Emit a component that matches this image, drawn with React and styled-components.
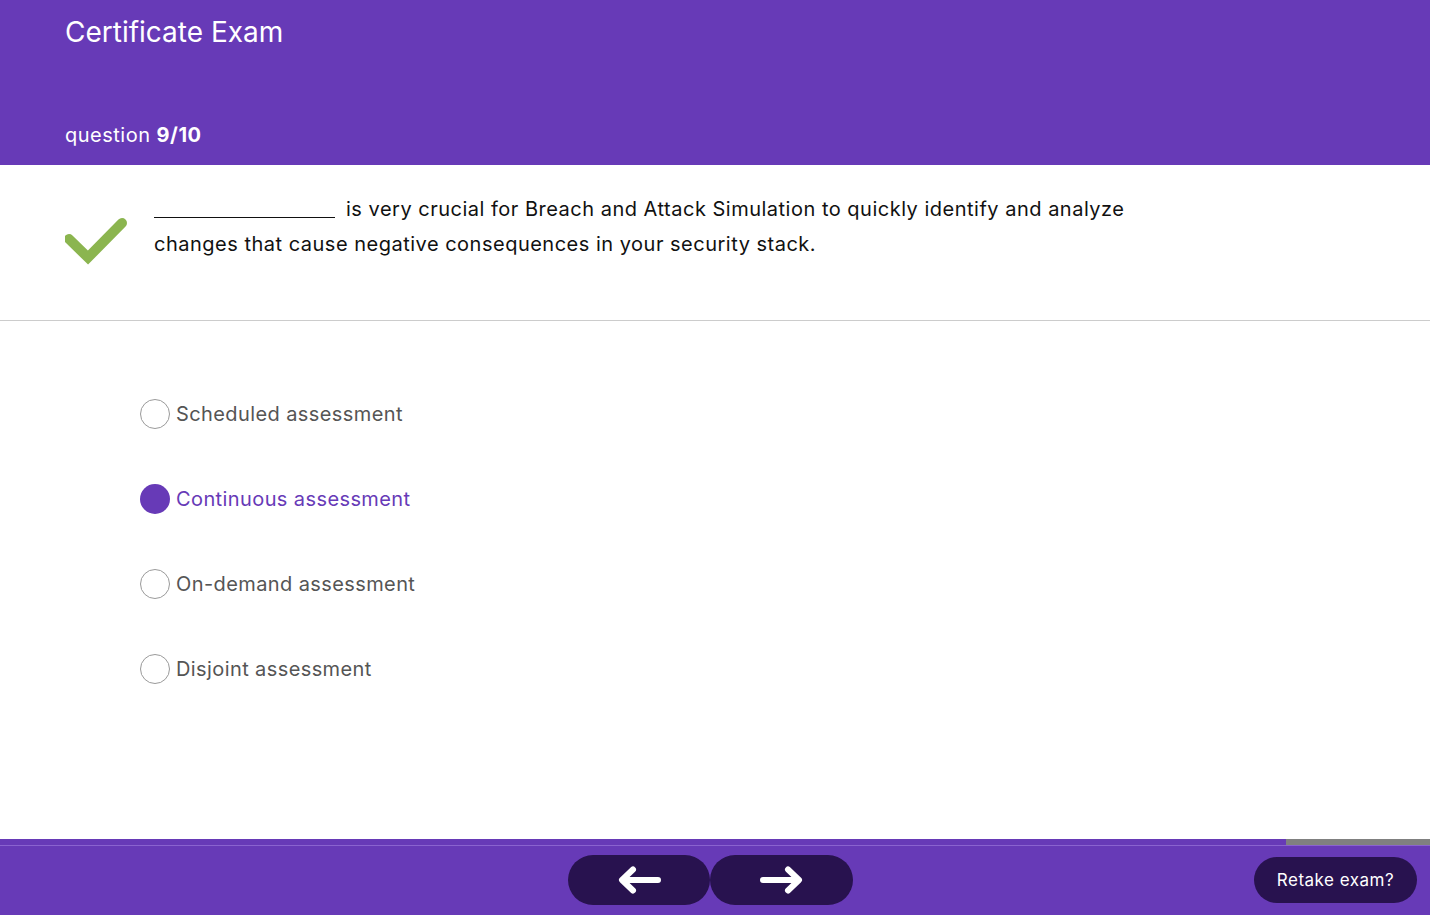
import React, { useState } from "react";
import styled, { createGlobalStyle } from "styled-components";

const GlobalStyle = createGlobalStyle`
  html, body {
    margin: 0;
    padding: 0;
    background: #ffffff;
    font-family: Inter, "Noto Sans", sans-serif;
  }
`;

const Page = styled.div`
  height: 915px;
  display: flex;
  flex-direction: column;
  overflow: hidden;
`;

const Header = styled.header`
  height: 165px;
  box-sizing: border-box;
  background-color: #673ab7;
  color: #ffffff;
  padding: 15px 65px 0;
  display: flex;
  flex-direction: column;
`;

const Title = styled.h1`
  margin: 0;
  font-size: 28px;
  font-weight: 400;
  line-height: 34px;
`;

const Counter = styled.div`
  margin-top: auto;
  margin-bottom: 16px;
  font-size: 20px;
  line-height: 28px;
  letter-spacing: 0.5px;

  b {
    font-weight: 700;
  }
`;

const QuestionRow = styled.section`
  height: 156px;
  box-sizing: border-box;
  border-bottom: 1px solid #cccccc;
  display: flex;
  align-items: center;
  padding: 0 0 0 65px;
`;

const Mark = styled.div`
  width: 65px;
  height: 50px;
  flex-shrink: 0;
  margin-right: 24px;
`;

const QuestionText = styled.p`
  margin: 0 0 32px;
  width: 1000px;
  font-size: 20px;
  line-height: 35px;
  letter-spacing: 0.5px;
  color: #111111;
`;

const Blank = styled.span`
  display: inline-block;
  width: 181px;
  border-bottom: 1.5px solid #111111;
  margin-right: 11px;
  vertical-align: -2px;
`;

const Options = styled.div`
  flex: 1;
  padding: 78px 0 0 140px;
  display: flex;
  flex-direction: column;
  gap: 55px;
`;

const Option = styled.label`
  display: flex;
  align-items: center;
  height: 30px;
  cursor: pointer;
  font-size: 20px;
  letter-spacing: 0.4px;
  color: ${(p) => (p.$selected ? "#673ab7" : "#555555")};
`;

const Radio = styled.span`
  width: 30px;
  height: 30px;
  box-sizing: border-box;
  border-radius: 50%;
  margin-right: 6px;
  border: ${(p) => (p.$selected ? "none" : "1.5px solid #9a9a9a")};
  background: ${(p) => (p.$selected ? "#673ab7" : "#ffffff")};
`;

const Progress = styled.div`
  height: 6px;
  background: #808080;
  display: flex;
`;

const ProgressFill = styled.div`
  height: 100%;
  background: #673ab7;
`;

const Footer = styled.footer`
  height: 70px;
  box-sizing: border-box;
  background: #673ab7;
  border-top: 1px solid #8a63cf;
  position: relative;
  display: flex;
  align-items: center;
  justify-content: center;
  padding-bottom: 2px;
`;

const NavGroup = styled.div`
  display: flex;
  margin-left: -9px;
`;

const NavButton = styled.button`
  width: ${(p) => p.$w}px;
  height: 50px;
  border: none;
  border-radius: 25px;
  background: #28124f;
  display: flex;
  align-items: center;
  justify-content: center;
  cursor: pointer;
  padding: 0;
`;

const Retake = styled.button`
  position: absolute;
  right: 13px;
  top: 11px;
  width: 163px;
  height: 46px;
  border: none;
  border-radius: 23px;
  background: #28124f;
  color: #ffffff;
  font-family: Inter, "Noto Sans", sans-serif;
  font-size: 17px;
  letter-spacing: 0.5px;
  cursor: pointer;
`;

const Check = () => (
  <svg width="65" height="50" viewBox="0 0 65 50">
    <path
      d="M4 21 L23 39.5 L57 5"
      fill="none"
      stroke="#8bb54f"
      strokeWidth="10"
      strokeLinecap="round"
      strokeLinejoin="miter"
    />
  </svg>
);

const Arrow = ({ dir }) => (
  <svg
    width="44"
    height="30"
    viewBox="0 0 44 30"
    style={{ transform: dir === "left" ? "none" : "scaleX(-1)" }}
  >
    <path
      d="M41 15 H6 M16 4.5 L5 15 L16 25.5"
      fill="none"
      stroke="#ffffff"
      strokeWidth="6"
      strokeLinecap="round"
      strokeLinejoin="round"
    />
  </svg>
);

const answers = [
  "Scheduled assessment",
  "Continuous assessment",
  "On-demand assessment",
  "Disjoint assessment",
];

export default function App() {
  const [picked, setPicked] = useState(1);
  const done = 9;
  const total = 10;

  return (
    <Page>
      <GlobalStyle />
      <Header>
        <Title>Certificate Exam</Title>
        <Counter>
          question <b>{done}/{total}</b>
        </Counter>
      </Header>

      <QuestionRow>
        <Mark>
          <Check />
        </Mark>
        <QuestionText>
          <Blank />
          is very crucial for Breach and Attack Simulation to quickly identify
          and analyze changes that cause negative consequences in your security
          stack.
        </QuestionText>
      </QuestionRow>

      <Options>
        {answers.map((a, i) => (
          <Option key={a} $selected={picked === i} onClick={() => setPicked(i)}>
            <Radio $selected={picked === i} />
            {a}
          </Option>
        ))}
      </Options>

      <Progress>
        <ProgressFill style={{ width: `${(done / total) * 100 * 0.9993}%` }} />
      </Progress>
      <Footer>
        <NavGroup>
          <NavButton $w={142}>
            <Arrow dir="left" />
          </NavButton>
          <NavButton $w={143}>
            <Arrow dir="right" />
          </NavButton>
        </NavGroup>
        <Retake>Retake exam?</Retake>
      </Footer>
    </Page>
  );
}
